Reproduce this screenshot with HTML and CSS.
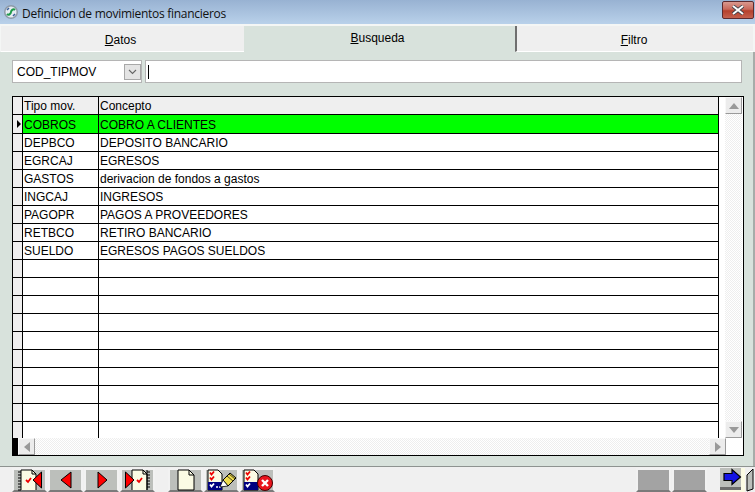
FILE: index.html
```html
<!DOCTYPE html>
<html lang="es">
<head>
<meta charset="utf-8">
<title>Definicion de movimientos financieros</title>
<link rel="stylesheet" href="styles.css">
</head>
<body>
<div class="window">
  <header class="titlebar">
    <svg class="app-icon" width="16" height="16" viewBox="0 0 16 16"><circle cx="8" cy="8" r="7" fill="#8d9aa8"/><circle cx="8" cy="8" r="5.5" fill="#e6ecf2"/><path d="M4 10c2 2 4-1 4-2s2-4 4-2" fill="none" stroke="#1f9a4a" stroke-width="2"/><path d="M4 6l2-2M12 10l-2 2" stroke="#3a5f9a" stroke-width="1.5"/></svg>
    <span class="title">Definicion de movimientos financieros</span>
    <div class="close"><svg width="14" height="10" viewBox="0 0 14 10"><path d="M2 1l10 8M12 1L2 9" stroke="#39404a" stroke-width="3.6"/><path d="M2 1l10 8M12 1L2 9" stroke="#fff" stroke-width="2"/></svg></div>
  </header>
  <nav class="tabs">
    <div class="tab tab-datos"><span><u>D</u>atos</span></div>
    <div class="tab tab-active"><span><u>B</u>usqueda</span></div>
    <div class="tab tab-filtro"><span><u>F</u>iltro</span></div>
  </nav>
  <main class="panel">
    <div class="search">
      <div class="combo"><span>COD_TIPMOV</span>
        <div class="combo-btn"><svg width="9" height="6" viewBox="0 0 9 6"><path d="M1 1l3.5 3.5L8 1" fill="none" stroke="#666" stroke-width="1.1"/></svg></div>
      </div>
      <div class="input"><i class="caret"></i></div>
    </div>
    <div class="grid">
      <div class="grid-body">
        <div class="rows">
          <div class="row head"><div class="gut"></div><div class="c1">Tipo mov.</div><div class="c2">Concepto</div></div>
          <div class="row sel"><div class="gut"><svg width="6" height="8" viewBox="0 0 6 8"><path d="M1 0l4 4-4 4z" fill="#000"/></svg></div><div class="c1">COBROS</div><div class="c2">COBRO A CLIENTES</div></div>
          <div class="row"><div class="gut"></div><div class="c1">DEPBCO</div><div class="c2">DEPOSITO BANCARIO</div></div>
          <div class="row"><div class="gut"></div><div class="c1">EGRCAJ</div><div class="c2">EGRESOS</div></div>
          <div class="row"><div class="gut"></div><div class="c1">GASTOS</div><div class="c2">derivacion de fondos a gastos</div></div>
          <div class="row"><div class="gut"></div><div class="c1">INGCAJ</div><div class="c2">INGRESOS</div></div>
          <div class="row"><div class="gut"></div><div class="c1">PAGOPR</div><div class="c2">PAGOS A PROVEEDORES</div></div>
          <div class="row"><div class="gut"></div><div class="c1">RETBCO</div><div class="c2">RETIRO BANCARIO</div></div>
          <div class="row"><div class="gut"></div><div class="c1">SUELDO</div><div class="c2">EGRESOS PAGOS SUELDOS</div></div>
          <div class="row"><div class="gut"></div><div class="c1"></div><div class="c2"></div></div>
          <div class="row"><div class="gut"></div><div class="c1"></div><div class="c2"></div></div>
          <div class="row"><div class="gut"></div><div class="c1"></div><div class="c2"></div></div>
          <div class="row"><div class="gut"></div><div class="c1"></div><div class="c2"></div></div>
          <div class="row"><div class="gut"></div><div class="c1"></div><div class="c2"></div></div>
          <div class="row"><div class="gut"></div><div class="c1"></div><div class="c2"></div></div>
          <div class="row"><div class="gut"></div><div class="c1"></div><div class="c2"></div></div>
          <div class="row"><div class="gut"></div><div class="c1"></div><div class="c2"></div></div>
          <div class="row"><div class="gut"></div><div class="c1"></div><div class="c2"></div></div>
          <div class="row last"><div class="gut"></div><div class="c1"></div><div class="c2"></div></div>
        </div>
        <div class="vscroll">
          <div class="sb-btn"><svg width="10" height="6" viewBox="0 0 10 6"><path d="M5 0l5 6H0z" fill="#999"/></svg></div>
          <div class="sb-track"></div>
          <div class="sb-btn"><svg width="10" height="6" viewBox="0 0 10 6"><path d="M0 0h10L5 6z" fill="#999"/></svg></div>
        </div>
      </div>
      <div class="hscroll">
        <div class="corner"></div>
        <div class="sb-btn"><svg width="6" height="10" viewBox="0 0 6 10"><path d="M6 0v10L0 5z" fill="#999"/></svg></div>
        <div class="sb-track"></div>
        <div class="sb-btn"><svg width="6" height="10" viewBox="0 0 6 10"><path d="M0 0l6 5-6 5z" fill="#999"/></svg></div>
        <div class="hs-end"></div>
      </div>
    </div>
  </main>
  <footer class="toolbar">
    <div class="tb-group">
      <div class="tb"><svg width="27" height="22" viewBox="0 0 27 22"><path d="M5 1h11l4 4v16H5z" fill="#fbfbe4"/><path d="M5 1h11l4 4v16M16 1v4h4" fill="none" stroke="#000"/><path d="M5 1v20M2 3h3M2 6h3M2 9h3M2 12h3M2 15h3M2 18h3M2 21h3" stroke="#000"/><path d="M10 11l2 2 3-4" fill="none" stroke="#e00" stroke-width="1.8"/><path d="M25.500 3v16L17 11z" fill="#f00" stroke="#000"/></svg></div>
      <div class="tb"><svg width="14" height="18" viewBox="0 0 14 18"><path d="M12 1v16L2 9z" fill="#f00" stroke="#000"/></svg></div>
      <div class="tb"><svg width="14" height="18" viewBox="0 0 14 18"><path d="M3 1v16l9-8z" fill="#f00" stroke="#000"/></svg></div>
      <div class="tb"><svg width="27" height="22" viewBox="0 0 27 22"><path d="M8 1h11l4 4v16H8z" fill="#fbfbe4"/><path d="M8 21V1h11l4 4v16M19 1v4h4" fill="none" stroke="#000"/><path d="M23 1v20M23 3h3M23 6h3M23 9h3M23 12h3M23 15h3M23 18h3" stroke="#000"/><path d="M13 11l2 2 3-4" fill="none" stroke="#e00" stroke-width="1.800"/><path d="M1.500 3l8.500 8-8.500 8z" fill="#f00" stroke="#000"/></svg></div>
    </div>
    <div class="tb-group">
      <div class="tb"><svg width="18" height="22" viewBox="0 0 18 22"><path d="M1 1h11l5 5v15H1z" fill="#fbfbe4" stroke="#000"/><path d="M12 1v5h5" fill="none" stroke="#000"/></svg></div>
      <div class="tb"><svg width="31" height="22" viewBox="0 0 31 22"><path d="M2 1h10l4 4v16H2z" fill="#fbfbe4" stroke="#000"/><path d="M2 13h14v8H2z" fill="#000080"/><path d="M4 3.500l1.500 2 2.500-3M4 8.500l1.500 2 2.500-3" fill="none" stroke="#e00" stroke-width="1.800"/><path d="M4 15.500l1.500 2 2.500-3" fill="none" stroke="#fff" stroke-width="1.800"/><path d="M10 18h2M13 18h2" stroke="#fff" stroke-width="1.500"/><path d="M17 11l7-7 6 5-8 8z" fill="#eedc50" stroke="#000"/><path d="M21 7l6 5M23 5l6 5" stroke="#000" stroke-width=".7"/><path d="M14 18l3-7 5 6z" fill="#fff" stroke="#000" stroke-width=".8"/></svg></div>
      <div class="tb"><svg width="31" height="22" viewBox="0 0 31 22"><path d="M2 1h10l4 4v16H2z" fill="#fbfbe4" stroke="#000"/><path d="M2 13h14v8H2z" fill="#000080"/><path d="M4 3.500l1.500 2 2.500-3M4 8.500l1.500 2 2.500-3" fill="none" stroke="#e00" stroke-width="1.800"/><path d="M4 15.500l1.500 2 2.500-3" fill="none" stroke="#fff" stroke-width="1.800"/><circle cx="23" cy="14" r="7.500" fill="#e8141c" stroke="#400"/><path d="M20 11l6 6M26 11l-6 6" stroke="#fff" stroke-width="2.400"/></svg></div>
    </div>
    <div class="tb-spacer"></div>
    <div class="tb-group">
      <div class="tb tb-blank"></div>
      <div class="tb tb-blank"></div>
    </div>
    <div class="exit">
      <svg width="35" height="24" viewBox="0 0 35 24"><path d="M21 0h4v24H0v-2h21z" fill="#fbfbe4"/><path d="M0 0h21v19H0z" fill="#bcbfbb"/><path d="M0 19h21v3H0z" fill="#6d6d6d"/><path d="M4 5.500h8V1.500l8.500 7.500-8.500 7.500v-4H4z" fill="#1414e6" stroke="#000" stroke-width="1.200"/><path d="M27 7l6-6v20l-6 2z" fill="#bcbfbb" stroke="#000"/></svg>
    </div>
  </footer>
</div>
</body>
</html>
```
FILE: styles.css
```css
* { box-sizing: border-box; }
html, body { margin: 0; padding: 0; }
body { width: 755px; height: 492px; overflow: hidden; font: 12px/1 "Liberation Sans", Arial, sans-serif; color: #000; background: #f0f0f0; }
.window { display: flex; flex-direction: column; height: 492px; }

.titlebar { height: 24px; flex: none; display: flex; align-items: center; padding: 0 1px 0 3px; background: linear-gradient(#98b2d2, #b9d1ea); }
.app-icon { flex: none; }
.title { margin-left: 3px; font: 12px "Open Sans", "Noto Sans", sans-serif; letter-spacing: -.28px; color: #111; margin-top: 2px; }
.close { margin-left: auto; margin-top: -4px; width: 32px; height: 18px; display: flex; align-items: center; justify-content: center; border: 1px solid #5d2a2e; border-radius: 2px; background: linear-gradient(#d9998f 0, #c9685a 45%, #b5402c 55%, #c4604e 100%); }

.tabs { height: 28px; flex: none; display: flex; padding: 2px 2px 0 1px; background: #f4f6f5; }
.tab { display: flex; justify-content: center; height: 26px; padding-top: 8px; background: #efefef; border-bottom: 1px solid #fff; }
.tab-datos { width: 243px; padding-right: 4px; }
.tab-active { width: 271px; background: #d8e2dc; border-bottom: 0; padding-top: 6px; padding-right: 4px; }
.tab-filtro { flex: 1; border-left: 2px solid #6f6f6f; padding-right: 2px; }

.panel { flex: 1; background: #d8e2dc; padding: 8px 11px 0 12px; border-right: 2px solid #a7aca9; }
.search { display: flex; gap: 3px; height: 23px; }
.combo { width: 130px; position: relative; display: flex; align-items: center; padding-left: 4px; background: #fff; border: 1px solid #b5b5b5; }
.combo-btn { position: absolute; right: 0; top: 3px; width: 17px; height: 16px; display: flex; align-items: center; justify-content: center; background: #e4e4e4; border: 1px solid #a8a8a8; }
.input { flex: 1; display: flex; align-items: center; padding-left: 2px; background: #fff; border: 1px solid #b5b5b5; }
.caret { width: 1px; height: 14px; background: #000; }

.grid { margin-top: 13px; height: 360px; width: 732px; border: 1px solid #000; background: #fff; display: flex; flex-direction: column; }
.grid-body { flex: 1; display: flex; min-height: 0; }
.rows { width: 706px; flex: none; }
.row { display: flex; height: 18px; border-bottom: 1px solid #000; line-height: 19px; }
.row.sel { height: 19px; line-height: 21px; }
.row.last { border-bottom: 0; height: 17px; }
.gut { width: 10px; flex: none; background: #efefef; border-right: 1px solid #000; display: flex; align-items: center; justify-content: flex-end; }
.c1 { width: 76px; flex: none; border-right: 1px solid #000; padding-left: 1px; white-space: nowrap; }
.c2 { flex: 1; border-right: 1px solid #000; padding-left: 1px; white-space: nowrap; }
.head .c1, .head .c2 { background: #efefef; }
.sel .c1, .sel .c2 { background: #00ff00; }

.vscroll { flex: 1; display: flex; flex-direction: column; padding-left: 6px; padding-right: 1px; }
.sb-btn { flex: none; width: 17px; height: 17px; display: flex; align-items: center; justify-content: center; background: #ececec; border: 1px solid; border-color: #f8f8f8 #9a9a9a #9a9a9a #f8f8f8; }
.sb-track { flex: 1; background: repeating-conic-gradient(#eeeeee 0 25%, #ffffff 0 50%) 0 0 / 2px 2px; }

.hscroll { height: 17px; flex: none; display: flex; }
.corner { width: 5px; flex: none; background: #000; }
.hs-end { width: 17px; flex: none; background: #fff; }

.toolbar { height: 26px; flex: none; display: flex; align-items: flex-end; padding: 0 0 0 12px; gap: 13px; border-top: 1px solid #8e9390; background: #f0f0f0; }
.tb-group { display: flex; gap: 1px; }
.tb { width: 35px; height: 24px; display: flex; align-items: center; justify-content: center; background: #bcbfbb; border: 2px solid; border-color: #f2f2f2 #f2f2f2 #7a7a7a #f2f2f2; }
.tb-blank { background: #a3a3a3; }
.tb-spacer { flex: 1; }
.exit { height: 24px; width: 35px; }
```
